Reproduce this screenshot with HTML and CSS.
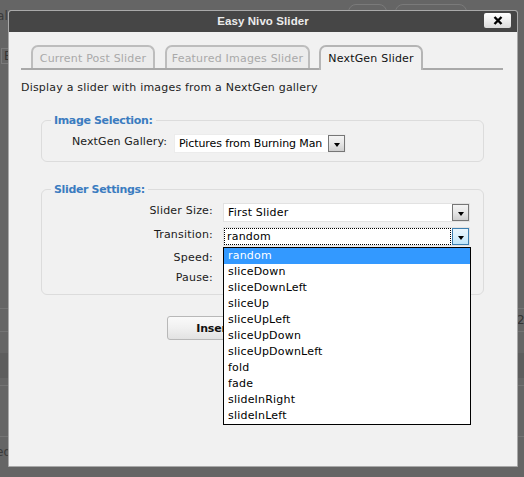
FILE: index.html
```html
<!DOCTYPE html>
<html>
<head>
<meta charset="utf-8">
<title>Easy Nivo Slider</title>
<link rel="stylesheet" href="styles.css">
</head>
<body>
<div class="backdrop">
  <span class="bg-btn bg-btn-1"></span>
  <span class="bg-btn bg-btn-2"></span>
  <span class="bg-text bg-al">al</span>
  <span class="bg-box">E</span>
  <span class="bg-line bg-l1"></span>
  <span class="bg-line bg-l2"></span>
  <span class="bg-band"></span>
  <span class="bg-line bg-l3"></span>
  <span class="bg-line bg-l4"></span>
  <span class="bg-text bg-ed">ed</span>
  <span class="bg-text bg-26">26</span>
</div>

<div class="dialog">
  <div class="titlebar">
    <span></span>
    <span class="title">Easy Nivo Slider</span>
    <button class="close" type="button" aria-label="Close">
      <svg width="10" height="9" viewBox="0 0 10 9"><path d="M1.5 1 L8.5 8 M8.5 1 L1.5 8" stroke="#000" stroke-width="2.4" fill="none"/></svg>
    </button>
  </div>

  <div class="content">
    <div class="tabs">
      <div class="tab tab-1">Current Post Slider</div>
      <div class="tab tab-2">Featured Images Slider</div>
      <div class="tab tab-3 active">NextGen Slider</div>
    </div>

    <p class="desc">Display a slider with images from a NextGen gallery</p>

    <fieldset class="group group-image">
      <legend>Image Selection:</legend>
      <div class="gallery-row">
        <label class="lbl gallery-lbl">NextGen Gallery:</label>
        <div class="select sel-gallery">
          <span class="sel-text">Pictures from Burning Man</span>
          <span class="sel-btn"><i class="tri"></i></span>
        </div>
      </div>
    </fieldset>

    <fieldset class="group group-settings">
      <legend>Slider Settings:</legend>
      <div class="settings">
        <label class="lbl">Slider Size:</label>
        <div class="select">
          <span class="sel-text">First Slider</span>
          <span class="sel-btn"><i class="tri"></i></span>
        </div>

        <label class="lbl">Transition:</label>
        <div class="select open">
          <span class="sel-text focus">random</span>
          <span class="sel-btn hot"><i class="tri"></i></span>
          <ul class="dropdown">
            <li class="sel">random</li>
            <li>sliceDown</li>
            <li>sliceDownLeft</li>
            <li>sliceUp</li>
            <li>sliceUpLeft</li>
            <li>sliceUpDown</li>
            <li>sliceUpDownLeft</li>
            <li>fold</li>
            <li>fade</li>
            <li>slideInRight</li>
            <li>slideInLeft</li>
          </ul>
        </div>

        <label class="lbl">Speed:</label>
        <div class="small-input"></div>

        <label class="lbl">Pause:</label>
        <div class="small-input"></div>
      </div>
    </fieldset>

    <div class="actions">
      <button class="btn" type="button">Insert</button>
    </div>
  </div>
</div>
</body>
</html>
```

FILE: styles.css
```css
* { box-sizing: border-box; }

html, body {
  margin: 0;
  padding: 0;
  width: 524px;
  height: 477px;
  overflow: hidden;
  background: #656565;
  font-family: "DejaVu Sans", Verdana, sans-serif;
  font-size: 11px;
  letter-spacing: 0.2px;
}

/* ---------- page behind the overlay ---------- */
.backdrop {
  position: absolute;
  inset: 0;
}
.bg-btn {
  position: absolute;
  top: 4px;
  height: 16px;
  border: 1px solid #7a7a7a;
  border-radius: 8px;
}
.bg-btn-1 { left: 348px; width: 39px; }
.bg-btn-2 { left: 395px; width: 72px; }
.bg-text {
  position: absolute;
  color: #3a3a3a;
  font-size: 12px;
}
.bg-al { left: -3px; top: 9px; }
.bg-ed { left: -4px; top: 445px; }
.bg-26 { left: 517px; top: 313px; color: #333; }
.bg-box {
  position: absolute;
  left: 1px;
  top: 48px;
  width: 14px;
  height: 16px;
  border: 1px solid #7a7a7a;
  color: #333;
  font-size: 12px;
  line-height: 14px;
  padding-left: 2px;
}
.bg-line {
  position: absolute;
  left: 0;
  right: 0;
  height: 1px;
  background: #747474;
}
.bg-l1 { top: 308px; }
.bg-l2 { top: 331px; }
.bg-l3 { top: 385px; }
.bg-l4 { top: 436px; }
.bg-band {
  position: absolute;
  left: 0;
  right: 0;
  top: 353px;
  height: 25px;
  background: #5d5d5d;
}

/* ---------- dialog window ---------- */
.dialog {
  position: absolute;
  left: 8px;
  top: 10px;
  width: 510px;
  height: 457px;
  border: 1px solid #a9a9a9;
  border-radius: 3px 3px 0 0;
  background: #f1f1f1;
  display: flex;
  flex-direction: column;
}

.titlebar {
  height: 21px;
  background: #464646;
  display: grid;
  grid-template-columns: 1fr auto 1fr;
  align-items: start;
  border-radius: 2px 2px 0 0;
}
.title {
  font-family: "Liberation Sans", Arial, sans-serif;
  letter-spacing: 0.1px;
  color: #ececec;
  font-weight: bold;
  font-size: 11.5px;
  line-height: 21px;
}
.close {
  justify-self: end;
  margin: 2px 6px 0 0;
  width: 27px;
  height: 15px;
  padding: 0;
  border: none;
  border-radius: 2px;
  background: linear-gradient(#ffffff, #f1f1f1 45%, #dcdcdc);
  display: flex;
  align-items: center;
  justify-content: center;
}
.close svg { display: block; }

.content {
  flex: 1;
  padding-top: 13px;
}

/* ---------- tabs ---------- */
.tabs {
  margin: 0 14px 0 12px;
  padding-left: 10px;
  display: flex;
  align-items: flex-end;
  border-bottom: 2px solid #a9a9a9;
  height: 25px;
}
.tab {
  height: 23px;
  border: 2px solid #bdbdbd;
  border-bottom: none;
  border-radius: 7px 7px 0 0;
  background: #ececec;
  color: #a9a9a9;
  text-align: center;
  line-height: 21px;
  padding-top: 1px;
}
.tab-1 { width: 124px; }
.tab-2 { width: 145px; margin-left: 10px; }
.tab-3 { width: 104px; margin-left: 9px; }
.tab.active {
  height: 25px;
  margin-bottom: -2px;
  background: #f1f1f1;
  color: #111;
  border-color: #b5b5b5;
}

.desc {
  margin: 11px 0 0 12px;
  line-height: 13px;
  color: #1e1e1e;
}

/* ---------- fieldsets ---------- */
.group {
  margin: 0 33px 0 32px;
  padding: 7px 0 8px 0;
  border: 1px solid #dcdcdc;
  border-radius: 6px;
  min-width: 0;
}
.group legend {
  margin-left: 9px;
  padding: 0 3px;
  line-height: 13px;
  font-weight: bold;
  letter-spacing: -0.35px;
  color: #3b7cc0;
}
.group-image { margin-top: 20px; }
.group-settings { margin-top: 21px; }

.lbl {
  line-height: 14px;
  padding-top: 1px;
  color: #1a1a1a;
  white-space: nowrap;
}

.gallery-row {
  display: flex;
  align-items: flex-start;
  padding-left: 30px;
  gap: 8px;
}
.gallery-lbl {
  width: 94px;
  flex: none;
  letter-spacing: 0.1px;
}

.settings {
  display: grid;
  grid-template-columns: 171px 247px;
  grid-template-rows: 20px 19px 16px 16px;
  column-gap: 10px;
  row-gap: 4px;
}
.settings .lbl { text-align: right; }

/* ---------- select boxes ---------- */
.select {
  position: relative;
  height: 19px;
  display: flex;
  background: #fff;
  border: 1px solid #e2e2e2;
  color: #000;
}
.sel-gallery {
  flex: none;
  width: 172px;
  border-color: #ececec;
}
.sel-gallery .sel-text { letter-spacing: -0.1px; }
.sel-text {
  flex: 1;
  padding-left: 4px;
  line-height: 17px;
  white-space: nowrap;
  overflow: hidden;
}
.sel-text.focus {
  outline: 1px dotted #000;
  outline-offset: -1px;
  padding-left: 3px;
  margin: 0 1px 0 0;
}
.sel-btn {
  flex: none;
  width: 17px;
  height: 17px;
  border: 1px solid #767676;
  background: linear-gradient(#f4f4f4, #e6e6e6 50%, #cfcfcf);
  display: flex;
  justify-content: center;
  align-items: center;
  padding-top: 2px;
}
.sel-btn.hot {
  border-color: #3c7fb1;
  background: linear-gradient(#eaf6fd, #d9f0fc 50%, #bee6fd);
}
.tri {
  width: 0;
  height: 0;
  border-top: 4px solid #000;
  border-left: 3.5px solid transparent;
  border-right: 3.5px solid transparent;
}

.dropdown {
  position: absolute;
  z-index: 5;
  left: -1px;
  top: 19px;
  width: 248px;
  margin: 0;
  padding: 0;
  list-style: none;
  background: #fff;
  border: 1px solid #000;
}
.dropdown li {
  height: 16px;
  line-height: 16px;
  padding-left: 4px;
  color: #000;
}
.dropdown li.sel {
  background: #3399ff;
  color: #fff;
}

.small-input {
  width: 60px;
  height: 16px;
  background: #fff;
  border: 1px solid #e2e2e2;
}

/* ---------- buttons ---------- */
.actions {
  margin: 21px 0 0 158px;
  display: flex;
}
.btn {
  width: 94px;
  height: 24px;
  border: 1px solid #b8b8b8;
  border-radius: 3px;
  background: linear-gradient(#fafafa, #f0f0f0 50%, #e2e2e2);
  font-family: "DejaVu Sans", Verdana, sans-serif;
  font-size: 11px;
  font-weight: bold;
  letter-spacing: -0.2px;
  color: #111;
  padding: 0;
}
```
